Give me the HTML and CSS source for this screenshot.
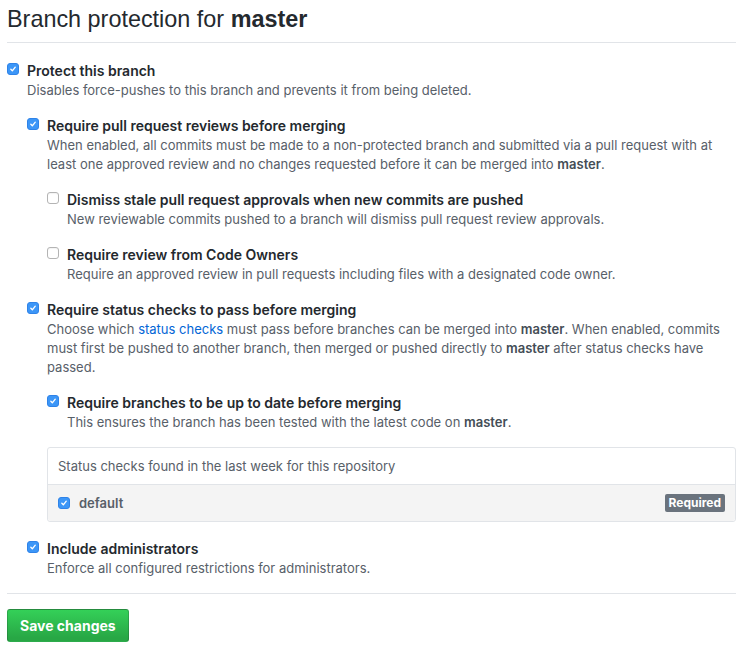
FILE: index.html
```html
<!DOCTYPE html>
<html lang="en">
<head>
    <meta charset="UTF-8">
    <title>Branch protection for master</title>
    <link rel="stylesheet" href="styles.css">
</head>
<body>
    <div class="page">
        <h2 class="subhead">Branch protection for <strong>master</strong></h2>

        <form class="protection-form">
            <div class="form-checkbox">
                <span class="check checked"><svg viewBox="0 0 12 12"><path d="M3.4 6.3 L5.2 8.2 L8.7 3.8"/></svg></span>
                <label>Protect this branch</label>
                <p class="note">Disables force-pushes to this branch and prevents it from being deleted.</p>

                <div class="form-checkbox">
                    <span class="check checked"><svg viewBox="0 0 12 12"><path d="M3.4 6.3 L5.2 8.2 L8.7 3.8"/></svg></span>
                    <label>Require pull request reviews before merging</label>
                    <p class="note">When enabled, all commits must be made to a non-protected branch and submitted via a pull request with at least one approved review and no changes requested before it can be merged into <strong>master</strong>.</p>

                    <div class="form-checkbox">
                        <span class="check"></span>
                        <label>Dismiss stale pull request approvals when new commits are pushed</label>
                        <p class="note">New reviewable commits pushed to a branch will dismiss pull request review approvals.</p>
                    </div>
                    <div class="form-checkbox">
                        <span class="check"></span>
                        <label>Require review from Code Owners</label>
                        <p class="note">Require an approved review in pull requests including files with a designated code owner.</p>
                    </div>
                </div>

                <div class="form-checkbox">
                    <span class="check checked"><svg viewBox="0 0 12 12"><path d="M3.4 6.3 L5.2 8.2 L8.7 3.8"/></svg></span>
                    <label>Require status checks to pass before merging</label>
                    <p class="note">Choose which <a href="#">status checks</a> must pass before branches can be merged into <strong>master</strong>. When enabled, commits must first be pushed to another branch, then merged or pushed directly to <strong>master</strong> after status checks have passed.</p>

                    <div class="form-checkbox">
                        <span class="check checked"><svg viewBox="0 0 12 12"><path d="M3.4 6.3 L5.2 8.2 L8.7 3.8"/></svg></span>
                        <label>Require branches to be up to date before merging</label>
                        <p class="note">This ensures the branch has been tested with the latest code on <strong>master</strong>.</p>
                    </div>

                    <div class="status-box">
                        <div class="status-header">Status checks found in the last week for this repository</div>
                        <div class="status-row">
                            <span class="check checked small"><svg viewBox="0 0 12 12"><path d="M3.4 6.3 L5.2 8.2 L8.7 3.8"/></svg></span>
                            <span class="status-name">default</span>
                            <span class="label-required">Required</span>
                        </div>
                    </div>
                </div>

                <div class="form-checkbox">
                    <span class="check checked"><svg viewBox="0 0 12 12"><path d="M3.4 6.3 L5.2 8.2 L8.7 3.8"/></svg></span>
                    <label>Include administrators</label>
                    <p class="note">Enforce all configured restrictions for administrators.</p>
                </div>
            </div>

            <div class="form-actions">
                <button type="button" class="btn-primary">Save changes</button>
            </div>
        </form>
    </div>
</body>
</html>
```

FILE: styles.css
```css
body {
    margin: 0;
    padding: 0;
    background-color: #fff;
    color: #24292e;
    font-family: Inter, "Liberation Sans", sans-serif;
    font-size: 14px;
    line-height: 1.5;
}
.page {
    padding: 4px 11px 0 7px;
}
.subhead {
    margin: 0 0 17px;
    padding-bottom: 8px;
    border-bottom: 1px solid #e1e4e8;
    font-family: "Liberation Sans", Arial, sans-serif;
    font-size: 23.4px;
    font-weight: normal;
    line-height: 30px;
}
.subhead strong {
    font-weight: 600;
}
.protection-form {
    margin: 0;
}
.form-checkbox {
    padding-left: 20px;
    margin: 15px 0;
}
.protection-form > .form-checkbox {
    margin-top: 0;
    margin-bottom: 14px;
}
.form-checkbox label {
    display: block;
    font-weight: 600;
    font-size: 14px;
    line-height: 21px;
}
.note {
    margin: 0;
    font-size: 13px;
    line-height: 19px;
    color: #586069;
}
.note strong {
    color: #444d56;
    font-weight: 600;
}
.note a {
    color: #0366d6;
    text-decoration: none;
}
.check {
    float: left;
    width: 12px;
    height: 12px;
    margin: 3px 0 0 -20px;
    box-sizing: border-box;
    border: 1px solid #b4b4b4;
    border-radius: 3px;
    background-color: #fff;
    box-shadow: inset 0 1px 1px rgba(0, 0, 0, 0.05);
}
.check.checked {
    border-color: #2f83e8;
    background-color: #3c96f7;
    box-shadow: none;
}
.check svg {
    display: block;
    width: 10px;
    height: 10px;
}
.check svg path {
    fill: none;
    stroke: #fff;
    stroke-width: 1.6;
    stroke-linecap: round;
    stroke-linejoin: round;
}
.status-box {
    margin-top: 15px;
    border: 1px solid #e1e4e8;
    border-radius: 3px;
    font-size: 13px;
}
.status-header {
    padding: 8px 10px;
    line-height: 20px;
    color: #586069;
    border-bottom: 1px solid #e1e4e8;
}
.status-row {
    display: flex;
    align-items: center;
    padding: 8px 10px;
    line-height: 20px;
    background-color: #f4f4f4;
    border-radius: 0 0 3px 3px;
}
.status-row .check {
    float: none;
    margin: 0 9px 0 0;
}
.status-name {
    flex: 1;
    font-weight: 600;
    color: #586069;
}
.label-required {
    padding: 0 4px;
    font-size: 12px;
    font-weight: 700;
    line-height: 18px;
    color: #fff;
    background-color: #6a737d;
    border-radius: 2px;
}
.protection-form > .form-checkbox > .form-checkbox:last-child {
    margin-top: 16px;
}
.form-actions {
    margin-top: 14px;
    padding-top: 15px;
    border-top: 1px solid #e1e4e8;
}
.btn-primary {
    padding: 6px 12px;
    font-family: inherit;
    font-size: 14px;
    font-weight: 700;
    line-height: 19px;
    color: #fff;
    background-color: #28a745;
    background-image: linear-gradient(-180deg, #34d058 0%, #28a745 90%);
    border: 1px solid rgba(27, 31, 35, 0.2);
    border-radius: 3px;
    cursor: pointer;
}
```
